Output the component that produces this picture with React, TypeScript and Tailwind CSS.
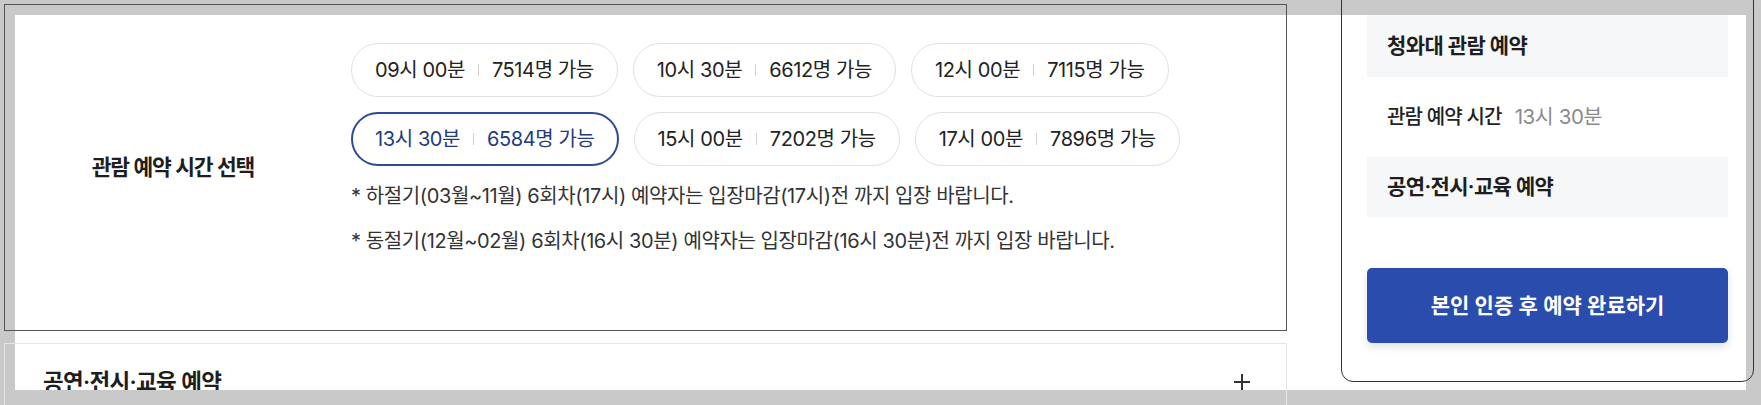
import React from "react";

type Slot = { time: string; count: string; selected?: boolean };

const slots: Slot[] = [
  { time: "09시 00분", count: "7514명 가능" },
  { time: "10시 30분", count: "6612명 가능" },
  { time: "12시 00분", count: "7115명 가능" },
  { time: "13시 30분", count: "6584명 가능", selected: true },
  { time: "15시 00분", count: "7202명 가능" },
  { time: "17시 00분", count: "7896명 가능" },
];

function Chip({ slot }: { slot: Slot }) {
  return (
    <button
      type="button"
      className={
        slot.selected
          ? "flex h-[54px] items-center rounded-full border-2 border-[#2d4a96] bg-white px-[22px] text-[20px] tracking-[-0.02em] text-[#233b7c]"
          : "flex h-[54px] items-center rounded-full border border-[#e1e1e1] bg-white px-[23px] text-[20px] tracking-[-0.02em] text-[#222]"
      }
    >
      <span>{slot.time}</span>
      <span className="mx-[13px] h-[12px] w-px bg-[#cfcfcf]" />
      <span>{slot.count}</span>
    </button>
  );
}

export default function App() {
  return (
    <div className="relative h-[405px] w-[1761px] overflow-hidden bg-white font-['Inter','Noto_Sans_CJK_KR',sans-serif] text-[#222]">
      <div className="flex items-start pl-[4px] pt-[4px]">
        {/* left column */}
        <div className="flex w-[1283px] shrink-0 flex-col gap-[12px]">
          <section className="relative flex h-[327px] items-center after:pointer-events-none after:absolute after:inset-0 after:z-20 after:border after:border-[#555] after:content-['']">
            <div className="w-[338px] shrink-0 text-center text-[21.5px] font-semibold tracking-[-0.05em] text-[#1e1e1e]">
              관람 예약 시간 선택
            </div>
            <div className="ml-[9px] flex w-[900px] flex-col self-start pt-[39px]">
              <div className="flex flex-wrap gap-x-[15px] gap-y-[15px]">
                {slots.map((s) => (
                  <Chip key={s.time} slot={s} />
                ))}
              </div>
              <div className="mt-[16px] flex flex-col gap-[17px] text-[20px] leading-[28px] tracking-[-0.02em] text-[#333]">
                <p>* 하절기(03월~11월) 6회차(17시) 예약자는 입장마감(17시)전 까지 입장 바랍니다.</p>
                <p>* 동절기(12월~02월) 6회차(16시 30분) 예약자는 입장마감(16시 30분)전 까지 입장 바랍니다.</p>
              </div>
            </div>
          </section>

          <section className="relative flex h-[90px] items-start justify-between pl-[39px] pr-[36px] pt-[24px] after:pointer-events-none after:absolute after:inset-0 after:z-20 after:border after:border-[#e6e6e6] after:content-['']">
            <h3 className="text-[22.5px] font-semibold leading-[30px] tracking-[-0.03em] text-[#1e1e1e]">
              공연·전시·교육 예약
            </h3>
            <svg width="18" height="18" viewBox="0 0 18 18" className="mt-[6px]" aria-hidden>
              <path d="M9 1v16M1 9h16" stroke="#333" strokeWidth="2" fill="none" />
            </svg>
          </section>
        </div>

        {/* right summary panel */}
        <aside className="relative ml-[54px] -mt-[15px] flex w-[413px] shrink-0 flex-col rounded-[12px] px-[26px] pb-[39px] pt-[26px] after:pointer-events-none after:absolute after:inset-0 after:z-20 after:rounded-[12px] after:border after:border-[#333] after:content-['']">
          <div className="flex h-[62px] items-center bg-[#f6f7f9] px-[20px] text-[21px] font-semibold tracking-[-0.03em] text-[#1e1e1e]">
            청와대 관람 예약
          </div>
          <div className="flex h-[80px] items-center gap-[13px] px-[20px]">
            <span className="text-[20px] font-medium tracking-[-0.04em] text-[#222]">관람 예약 시간</span>
            <span className="text-[20.5px] tracking-[-0.02em] text-[#8a8a8a]">13시 30분</span>
          </div>
          <div className="flex h-[60px] items-center bg-[#f6f7f9] px-[20px] text-[21px] font-semibold tracking-[-0.03em] text-[#1e1e1e]">
            공연·전시·교육 예약
          </div>
          <button
            type="button"
            className="mt-[51px] flex h-[75px] items-center justify-center rounded-[5px] bg-[#2a4cad] text-[21px] font-semibold text-white shadow-[0_4px_8px_rgba(0,0,0,0.12)]"
          >
            본인 인증 후 예약 완료하기
          </button>
        </aside>
      </div>

      {/* grey frame around the visible viewport */}
      <div className="pointer-events-none absolute inset-0 z-10 border-[15px] border-[#c9c9c9]" />
    </div>
  );
}
